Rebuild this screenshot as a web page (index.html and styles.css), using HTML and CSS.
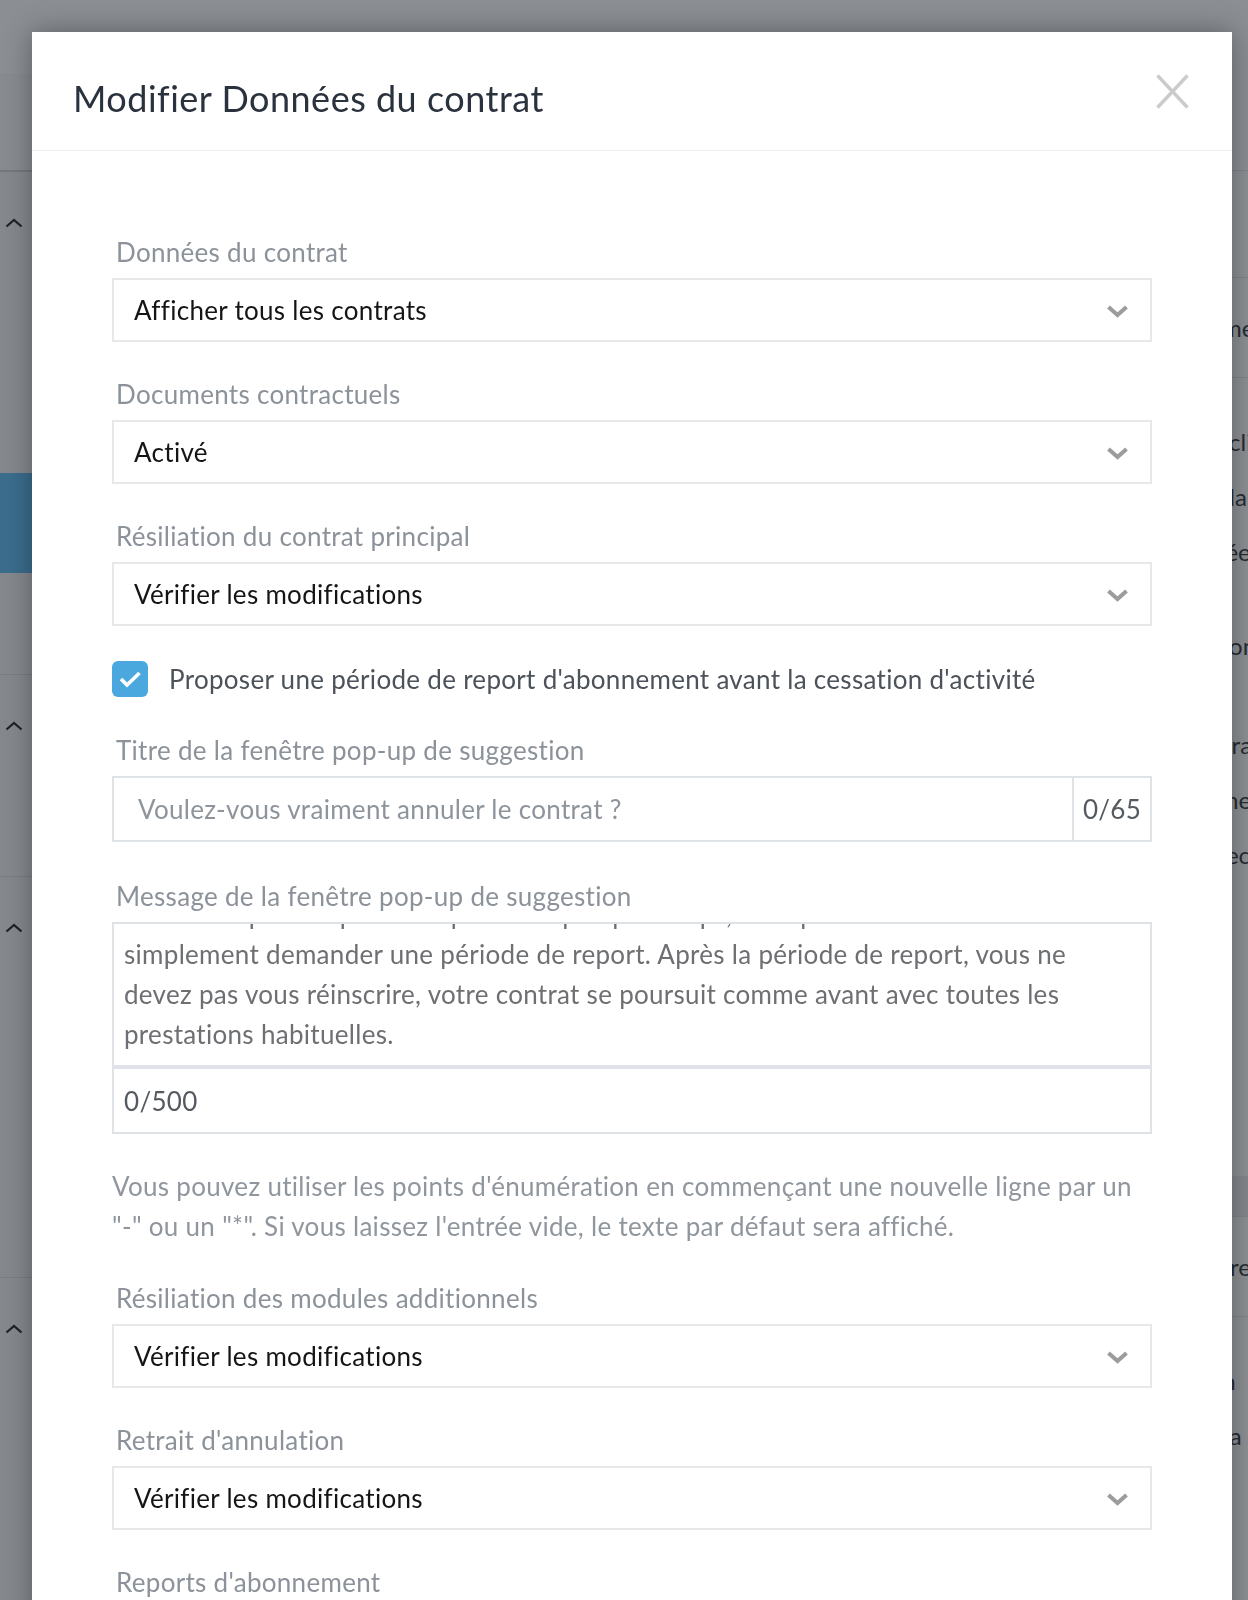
FILE: index.html
```html
<!DOCTYPE html>
<html lang="fr">
<head>
    <meta charset="UTF-8">
    <meta name="viewport" content="width=device-width, initial-scale=1.0">
    <title>Modifier Données du contrat</title>
    <link rel="stylesheet" href="styles.css">
</head>
<body>
<div class="page">
    <aside class="side">
        <div class="side-head"></div>
        <div class="side-tools"></div>
        <div class="side-sec sec-a">
            <svg class="up" width="18" height="10" viewBox="0 0 18 10"><path d="M1.5 8.5 9 2l7.5 6.5" fill="none" stroke="#1e2228" stroke-width="2.2"/></svg>
            <div class="side-item active"></div>
        </div>
        <div class="side-sec sec-b">
            <svg class="up" width="18" height="10" viewBox="0 0 18 10"><path d="M1.5 8.5 9 2l7.5 6.5" fill="none" stroke="#1e2228" stroke-width="2.2"/></svg>
        </div>
        <div class="side-sec sec-c">
            <svg class="up" width="18" height="10" viewBox="0 0 18 10"><path d="M1.5 8.5 9 2l7.5 6.5" fill="none" stroke="#1e2228" stroke-width="2.2"/></svg>
        </div>
        <div class="side-sec sec-d">
            <svg class="up" width="18" height="10" viewBox="0 0 18 10"><path d="M1.5 8.5 9 2l7.5 6.5" fill="none" stroke="#1e2228" stroke-width="2.2"/></svg>
        </div>
    </aside>
    <main class="main">
        <div class="m-head"></div>
        <div class="m-tabs"></div>
        <div class="m-row">Informations générales du contrat et conditions particulières des membres actives</div>
        <div class="m-list">
            <div class="m-line">Conditions générales de vente et modalités de résiliation pour les clientes</div>
            <div class="m-line">Le contrat se renouvelle automatiquement à chaque échéance de la période</div>
            <div class="m-line">Les prestations habituelles restent disponibles durant toute la duréetic</div>
            <div class="m-line gap1">Les documents contractuels sont envoyés par e-mail au membre concernéd</div>
            <div class="m-line gap2">Les modifications doivent être vérifiées avant la validation du contrater</div>
            <div class="m-line">Le membre peut demander une période de report de son abonnement le l</div>
            <div class="m-line">Après la période de report, le contrat se poursuit comme avant avec ce</div>
        </div>
        <div class="m-band"></div>
        <div class="m-row">Résiliation des modules additionnels et des options complémentaires en</div>
        <div class="m-list m-list2">
            <div class="m-line">Retrait d'annulation possible jusqu'à la date de fin de la résiliationn</div>
            <div class="m-line">Reports d'abonnement accordés selon les conditions définies par la pa</div>
        </div>
    </main>
</div>

<div class="overlay"></div>

<div class="modal">
    <div class="modal-head">
        <h2>Modifier Données du contrat</h2>
        <button class="close" type="button" aria-label="Fermer">
            <svg width="33" height="35" viewBox="0 0 33 35"><path d="M1.5 1.5 31.5 33.5M31.5 1.5 1.5 33.5" stroke="#cbcbcb" stroke-width="3.4" fill="none"/></svg>
        </button>
    </div>
    <div class="modal-body">
        <div class="field">
            <label>Données du contrat</label>
            <div class="select">
                <span>Afficher tous les contrats</span>
                <svg width="23" height="14" viewBox="0 0 23 14"><path d="M2.5 3 11.5 11l9-8" fill="none" stroke="#9c9c9c" stroke-width="4"/></svg>
            </div>
        </div>
        <div class="field">
            <label>Documents contractuels</label>
            <div class="select">
                <span>Activé</span>
                <svg width="23" height="14" viewBox="0 0 23 14"><path d="M2.5 3 11.5 11l9-8" fill="none" stroke="#9c9c9c" stroke-width="4"/></svg>
            </div>
        </div>
        <div class="field">
            <label>Résiliation du contrat principal</label>
            <div class="select">
                <span>Vérifier les modifications</span>
                <svg width="23" height="14" viewBox="0 0 23 14"><path d="M2.5 3 11.5 11l9-8" fill="none" stroke="#9c9c9c" stroke-width="4"/></svg>
            </div>
        </div>

        <div class="check-row">
            <span class="check">
                <svg width="24" height="18" viewBox="0 0 24 18"><path d="M3 9l6 6L21.5 3" fill="none" stroke="#fff" stroke-width="3.6"/></svg>
            </span>
            <span class="check-text">Proposer une période de report d'abonnement avant la cessation d'activité</span>
        </div>

        <div class="field field-text">
            <label>Titre de la fenêtre pop-up de suggestion</label>
            <div class="input">
                <span class="placeholder">Voulez-vous vraiment annuler le contrat ?</span>
                <span class="count">0/65</span>
            </div>
        </div>

        <div class="field field-area">
            <label>Message de la fenêtre pop-up de suggestion</label>
            <div class="area">
                <div class="area-text">
                    Si vous ne pouvez pas venir pendant quelque temps, vous pouvez<br>
                    simplement demander une période de report. Après la période de report, vous ne<br>
                    devez pas vous réinscrire, votre contrat se poursuit comme avant avec toutes les<br>
                    prestations habituelles.
                </div>
            </div>
            <div class="area-count">0/500</div>
        </div>

        <p class="help">Vous pouvez utiliser les points d'énumération en commençant une nouvelle ligne par un "-" ou un "*". Si vous laissez l'entrée vide, le texte par défaut sera affiché.</p>

        <div class="field">
            <label>Résiliation des modules additionnels</label>
            <div class="select">
                <span>Vérifier les modifications</span>
                <svg width="23" height="14" viewBox="0 0 23 14"><path d="M2.5 3 11.5 11l9-8" fill="none" stroke="#9c9c9c" stroke-width="4"/></svg>
            </div>
        </div>
        <div class="field">
            <label>Retrait d'annulation</label>
            <div class="select">
                <span>Vérifier les modifications</span>
                <svg width="23" height="14" viewBox="0 0 23 14"><path d="M2.5 3 11.5 11l9-8" fill="none" stroke="#9c9c9c" stroke-width="4"/></svg>
            </div>
        </div>
        <div class="field">
            <label>Reports d'abonnement</label>
            <div class="select">
                <span>Activé</span>
                <svg width="23" height="14" viewBox="0 0 23 14"><path d="M2.5 3 11.5 11l9-8" fill="none" stroke="#9c9c9c" stroke-width="4"/></svg>
            </div>
        </div>
    </div>
</div>
</body>
</html>
```

FILE: styles.css
```css
* {
    margin: 0;
    padding: 0;
    box-sizing: border-box;
}
html, body {
    height: 1600px;
    overflow: hidden;
}
body {
    font-family: Lato, "Open Sans", sans-serif;
    background: #fff;
    color: #222;
}

/* page behind the dialog */
.page {
    display: flex;
    height: 1600px;
}
.side {
    width: 300px;
    flex: none;
    background: #eef0f3;
}
.side-head {
    height: 73px;
    background: #fafbfc;
}
.side-tools {
    height: 99px;
    background: #f4f5f7;
    border-bottom: 2px solid #cdd1d6;
}
.side-sec {
    border-bottom: 1px solid #d6d9de;
    padding-top: 46px;
}
.side-sec .up {
    display: block;
    margin-left: 5px;
}
.sec-a { height: 503px; }
.sec-b { height: 202px; }
.sec-c { height: 401px; }
.sec-d { height: 330px; }
.side-item.active {
    margin-top: 245px;
    height: 100px;
    background: #5ab9f0;
}

.main {
    width: 1200px;
    flex: none;
    background: #fff;
    font-size: 24px;
    color: #33373d;
    white-space: nowrap;
    overflow: hidden;
}
.m-head {
    height: 171px;
    background: #fafbfc;
    border-bottom: 1px solid #e2e4e7;
}
.m-tabs {
    height: 107px;
    border-bottom: 1px solid #e2e4e7;
}
.m-row {
    height: 100px;
    line-height: 100px;
    padding-left: 240px;
    border-bottom: 1px solid #e2e4e7;
}
.m-list {
    padding: 36px 0 0 240px;
    height: 798px;
}
.m-line {
    line-height: 55px;
}
.m-line.gap1 { margin-top: 39px; }
.m-line.gap2 { margin-top: 44px; }
.m-band {
    height: 41px;
    background: #eceef1;
    border-bottom: 1px solid #e2e4e7;
}
.m-list2 {
    height: auto;
    padding-top: 36px;
}

.overlay {
    position: fixed;
    inset: 0;
    background: rgba(28, 33, 42, 0.5);
}

/* dialog */
.modal {
    position: absolute;
    left: 32px;
    top: 32px;
    width: 1200px;
    height: 1700px;
    background: #fff;
    box-shadow: 0 0 26px rgba(0, 0, 0, 0.35);
}
.modal-head {
    height: 119px;
    padding: 45px 43px 0 41px;
    border-bottom: 1px solid #efefef;
    display: flex;
    justify-content: space-between;
    align-items: flex-start;
}
.modal-head h2 {
    font-size: 36px;
    font-weight: 400;
    line-height: 43px;
    letter-spacing: 0.5px;
    color: #2a323d;
}
.close {
    border: 0;
    background: none;
    margin-top: -3px;
    width: 33px;
    height: 35px;
}
.close svg {
    display: block;
}

.modal-body {
    padding: 86px 80px 0;
    font-size: 26px;
    letter-spacing: 0.3px;
}
.field {
    margin-bottom: 37px;
}
.field label {
    display: block;
    line-height: 30px;
    padding-left: 4px;
    margin-bottom: 11px;
    color: #8c9299;
}
.select {
    height: 64px;
    border: 2px solid #e8e8e8;
    padding: 0 21px 0 20px;
    display: flex;
    align-items: center;
    justify-content: space-between;
    color: #151515;
}
.select svg {
    margin-top: 2px;
}

.check-row {
    display: flex;
    align-items: center;
    gap: 21px;
    margin: -2px 0 38px;
    height: 36px;
}
.check {
    width: 36px;
    height: 36px;
    border-radius: 6px;
    background: #4aa8de;
    display: flex;
    align-items: center;
    justify-content: center;
}
.check-text {
    color: #4c525a;
}

.input {
    height: 66px;
    border: 2px solid #dfe3e7;
    display: flex;
    align-items: stretch;
}
.placeholder {
    flex: 1;
    display: flex;
    align-items: center;
    padding-left: 24px;
    color: #8e949b;
}
.count {
    width: 78px;
    border-left: 2px solid #dfe3e7;
    display: flex;
    align-items: center;
    justify-content: center;
    color: #555a60;
}
.field-text {
    margin-bottom: 39px;
}

.area {
    height: 145px;
    border: 2px solid #dfe3e7;
    overflow: hidden;
}
.area-text {
    margin-top: -30px;
    padding: 0 10px;
    line-height: 40px;
    color: #6d6f72;
}
.area-count {
    height: 67px;
    border: 2px solid #dfe3e7;
    padding-left: 10px;
    display: flex;
    align-items: center;
    color: #555a60;
}
.field-area {
    margin-bottom: 32px;
}

.help {
    line-height: 40px;
    color: #90969d;
    margin-bottom: 37px;
}
```
